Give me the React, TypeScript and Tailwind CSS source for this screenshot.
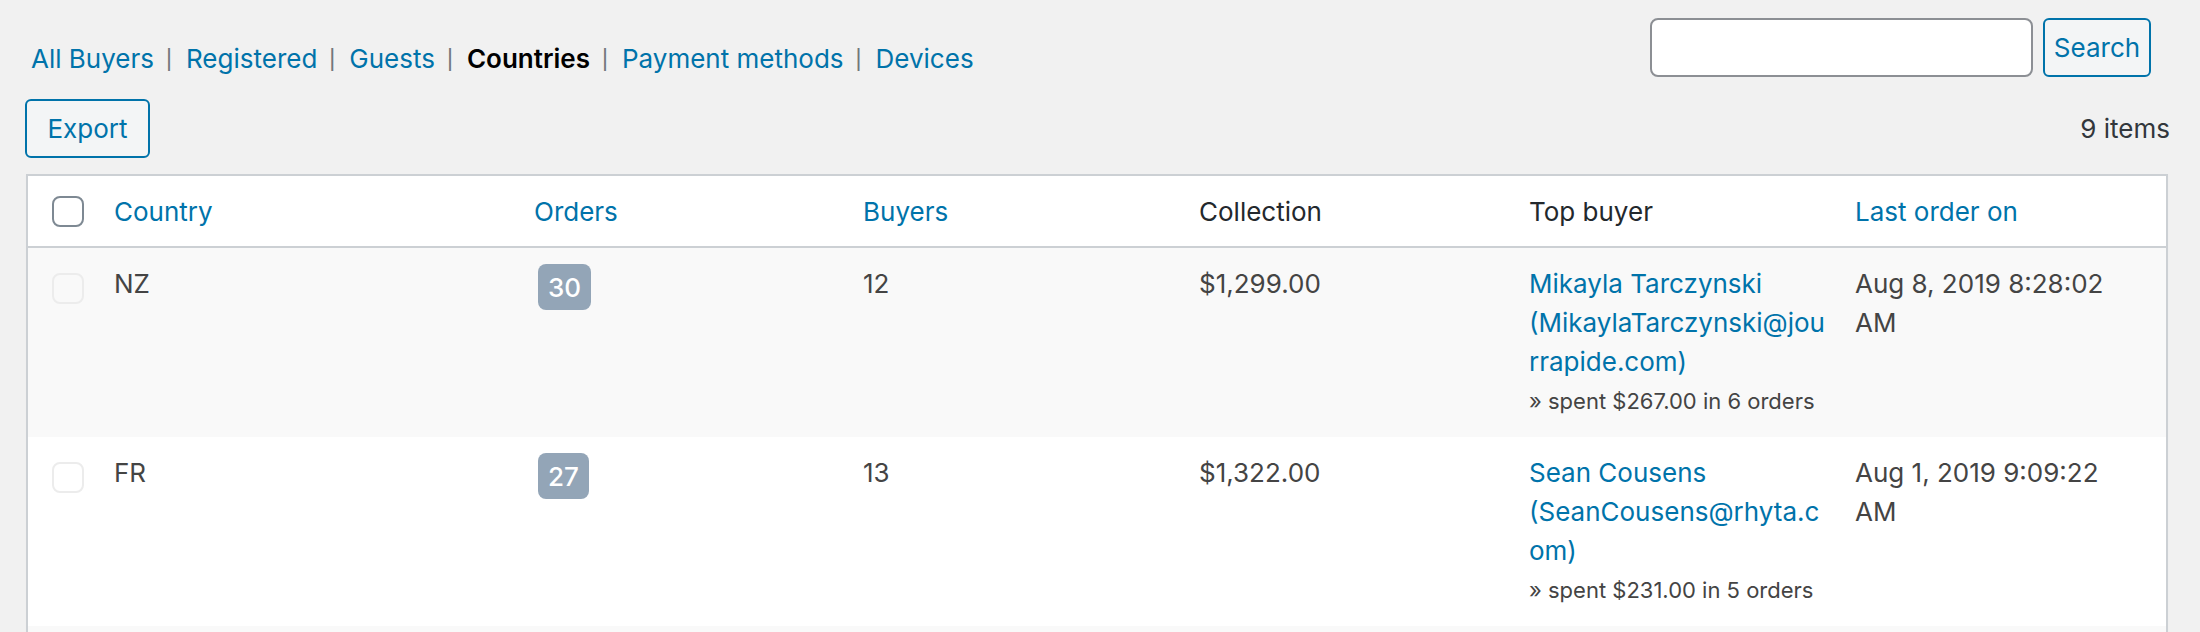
import React from 'react';

const views = ['All Buyers', 'Registered', 'Guests', 'Countries', 'Payment methods', 'Devices'];

const columns = [
  { label: 'Country', sortable: true },
  { label: 'Orders', sortable: true },
  { label: 'Buyers', sortable: true },
  { label: 'Collection', sortable: false },
  { label: 'Top buyer', sortable: false },
  { label: 'Last order on', sortable: true },
];

const rows = [
  {
    country: 'NZ',
    orders: 30,
    buyers: 12,
    collection: '$1,299.00',
    buyer: 'Mikayla Tarczynski',
    email: ['(MikaylaTarczynski@jou', 'rrapide.com)'],
    spent: '» spent $267.00 in 6 orders',
    last: 'Aug 8, 2019 8:28:02 AM',
  },
  {
    country: 'FR',
    orders: 27,
    buyers: 13,
    collection: '$1,322.00',
    buyer: 'Sean Cousens',
    email: ['(SeanCousens@rhyta.c', 'om)'],
    spent: '» spent $231.00 in 5 orders',
    last: 'Aug 1, 2019 9:09:22 AM',
  },
];

const grid = 'grid grid-cols-[66px_420px_329px_336px_330px_326px_1fr]';

export default function App() {
  return (
    <div className="min-h-screen bg-[#f1f1f1] pl-[25px] pr-[32px] pt-[18px] font-['Inter',sans-serif] text-[26px] text-[#444]">
      <div className="flex items-start justify-between">
        <ul className="ml-[6px] mt-[21px] flex items-center leading-[39px]">
          {views.map((v, i) => (
            <li key={v} className="flex items-center">
              {i > 0 && (
                <span className="ml-[12px] mr-[14px] font-['Liberation_Sans',sans-serif] text-[23px] text-[#72777c]">|</span>
              )}
              <a
                className={v === 'Countries' ? 'font-semibold text-black' : 'text-[#0073aa]'}
                href="#"
              >
                {v}
              </a>
            </li>
          ))}
        </ul>

        {/* search box */}
        <div className="mr-[17px] flex gap-[10px]">
          <input className="h-[59px] w-[383px] rounded-[8px] border-2 border-[#8c8f94] bg-white" />
          <button className="h-[59px] w-[108px] rounded-[6px] border-2 border-[#0073aa] bg-[#f3f5f6] text-[#0073aa]">
            Search
          </button>
        </div>
      </div>

      <div className="mt-[21px] flex items-center justify-between">
        <button className="h-[59px] w-[125px] rounded-[6px] border-2 border-[#0073aa] bg-[#f3f5f6] text-[#0073aa]">
          Export
        </button>
        <span className="mr-[-2px] text-[#32373c]">9 items</span>
      </div>

      <div className="ml-[1px] mt-[16px] border-2 border-[#ccd0d4] bg-white shadow-[0_1px_1px_rgba(0,0,0,0.04)]">
        {/* header */}
        <div className={`${grid} h-[72px] items-center border-b-2 border-[#ccd0d4]`}>
          <div className="pl-[24px]">
            <div className="h-[31px] w-[32px] rounded-[8px] border-2 border-[#7e8993] bg-white" />
          </div>
          {columns.map((c) => (
            <div key={c.label} className={`px-[20px] ${c.sortable ? 'text-[#0073aa]' : 'text-[#23282d]'}`}>
              {c.label}
            </div>
          ))}
        </div>

        {rows.map((r, i) => (
          <div
            key={r.country}
            className={`${grid} pb-[16px] pt-[16px] leading-[39px] ${i % 2 === 0 ? 'bg-[#f9f9f9]' : 'bg-white'}`}
          >
            <div className="pl-[24px] pt-[9px]">
              <div className="h-[31px] w-[32px] rounded-[8px] border-2 border-[#ececec]" />
            </div>
            <div className="px-[20px]">{r.country}</div>
            <div className="px-[20px]">
              <span className="ml-[4px] inline-flex h-[46px] items-center rounded-[8px] bg-[#93a5b7] px-[10px] font-medium text-white">
                {r.orders}
              </span>
            </div>
            <div className="px-[20px]">{r.buyers}</div>
            <div className="px-[20px]">{r.collection}</div>
            <div className="px-[20px]">
              <a href="#" className="text-[#0073aa]">
                {r.buyer}
                {r.email.map((e) => (
                  <span key={e} className="block">
                    {e}
                  </span>
                ))}
              </a>
              <div className="text-[22px] leading-[40px] text-[#444]">{r.spent}</div>
            </div>
            <div className="px-[20px]">{r.last}</div>
          </div>
        ))}

        {/* next striped row, runs past the fold */}
        <div className="h-[40px] bg-[#f9f9f9]" />
      </div>
    </div>
  );
}
